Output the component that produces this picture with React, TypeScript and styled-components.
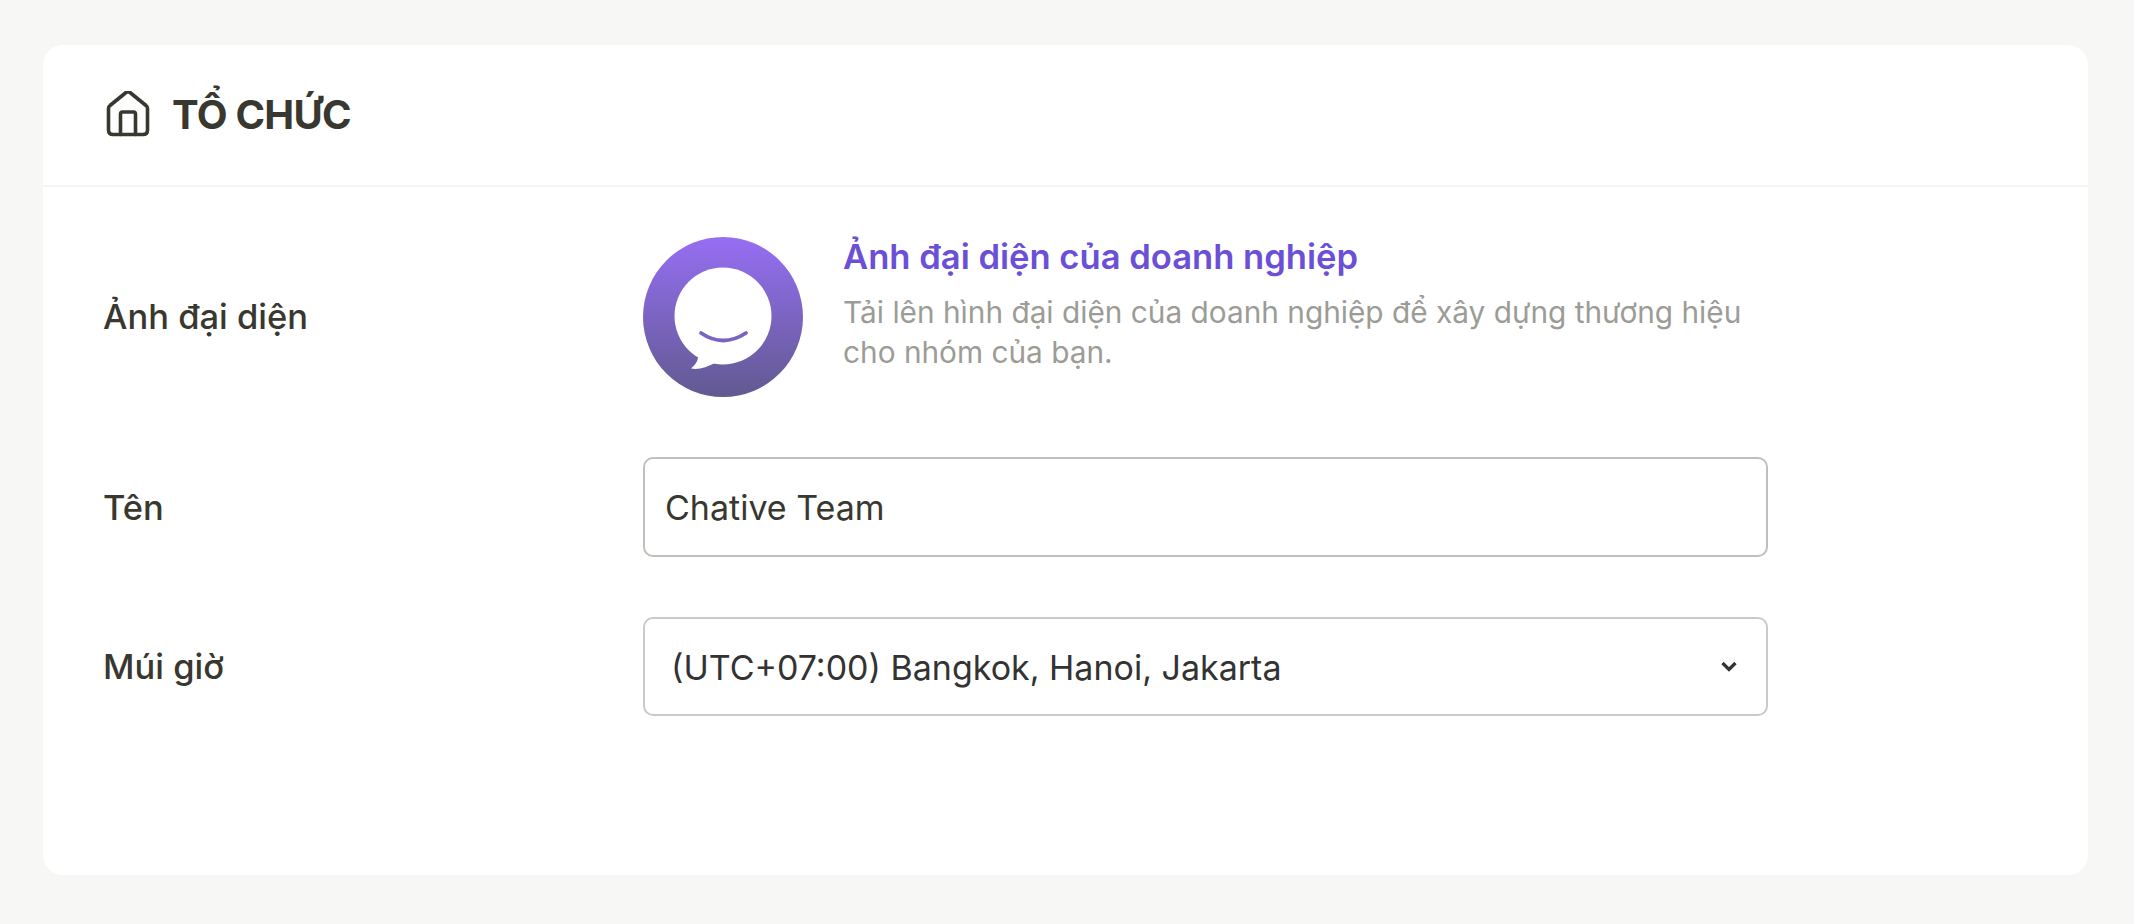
import React from "react";
import styled, { createGlobalStyle } from "styled-components";

const Global = createGlobalStyle`
  html, body { margin: 0; padding: 0; background: #f7f7f5; }
  body { font-family: Inter, "Noto Sans", sans-serif; }
`;

const Page = styled.div`
  box-sizing: border-box;
  width: 2134px;
  height: 924px;
  padding: 45px 46px 49px 43px;
  background: #f7f7f5;
`;

const Card = styled.main`
  height: 830px;
  background: #fff;
  border-radius: 20px;
`;

const Header = styled.header`
  box-sizing: border-box;
  height: 142px;
  padding-left: 63px;
  display: flex;
  align-items: center;
  gap: 22px;
  border-bottom: 2px solid #f5f5f1;
`;

const Title = styled.h1`
  margin: 0;
  font-size: 40px;
  line-height: 44px;
  font-weight: 700;
  letter-spacing: -0.75px;
  color: #383830;
`;

const Body = styled.div`
  padding: 50px 0 0 60px;
  display: flex;
  flex-direction: column;
  gap: 60px;
`;

const Row = styled.div`
  display: flex;
  align-items: center;
`;

const Label = styled.label<{ $nudge?: number }>`
  width: 540px;
  flex: none;
  padding-top: ${(p) => p.$nudge ?? 0}px;
  font-size: 34.5px;
  line-height: 40px;
  font-weight: 500;
  color: #383830;
`;

const AvatarBlock = styled.div`
  display: flex;
  align-items: flex-start;
  gap: 40px;
`;

const AvatarText = styled.div`
  width: 905px;
  margin-top: -1px;
`;

const AvatarTitle = styled.div`
  font-size: 34.6px;
  line-height: 40px;
  font-weight: 600;
  color: #6b4fd6;
  margin-bottom: 16px;
`;

const AvatarHint = styled.div`
  font-size: 29.8px;
  line-height: 40px;
  font-weight: 400;
  color: #9c9c96;
`;

const TextField = styled.input`
  box-sizing: border-box;
  width: 1125px;
  height: 100px;
  padding: 0 20px;
  border: 2px solid #c0c0ba;
  border-radius: 10px;
  outline: none;
  background: #fff;
  font-family: inherit;
  font-size: 34px;
  color: #383830;
`;

const SelectWrap = styled.div`
  position: relative;
  width: 1125px;
  height: 99px;
`;

const SelectField = styled.select`
  box-sizing: border-box;
  width: 100%;
  height: 100%;
  padding: 2px 26px 0;
  appearance: none;
  border: 2px solid #cacaca;
  border-radius: 10px;
  outline: none;
  background: #fff;
  font-family: inherit;
  font-size: 34px;
  color: #333;
`;

const Chevron = styled.svg`
  position: absolute;
  right: 31px;
  top: 44px;
  pointer-events: none;
`;

const HomeIcon = () => (
  <svg width="44" height="48" viewBox="0 2 44 48" fill="none" stroke="#383830" strokeWidth="3.6" strokeLinejoin="round" strokeLinecap="round">
    <path d="M2.5 19.5 Q2.5 17.5 4 16.5 L20 3.5 Q22 2 24 3.5 L40 16.5 Q41.5 17.5 41.5 19.5 V41 Q41.5 45.5 37 45.5 H7 Q2.5 45.5 2.5 41 Z" />
    <path d="M14.5 45.5 V25 Q14.5 23 16.5 23 H27.5 Q29.5 23 29.5 25 V45.5" />
  </svg>
);

const Logo = () => (
  <svg width="160" height="160" viewBox="0 0 160 160" style={{ flex: "none" }}>
    <defs>
      <linearGradient id="logoGrad" x1="0" y1="0" x2="0" y2="1">
        <stop offset="0" stopColor="#966ef3" />
        <stop offset="1" stopColor="#615a90" />
      </linearGradient>
    </defs>
    <circle cx="80" cy="80" r="80" fill="url(#logoGrad)" />
    <circle cx="80" cy="79" r="48.5" fill="#fff" />
    <path d="M55 116 C56 123 53 127 48 131.5 C56 133 64 130 72 126 Z" fill="#fff" />
    <path d="M58 96 Q80 111 103 96" fill="none" stroke="#7a63c2" strokeWidth="3.8" strokeLinecap="round" />
  </svg>
);

export default function App() {
  return (
    <Page>
      <Global />
      <Card>
        <Header>
          <HomeIcon />
          <Title>TỔ CHỨC</Title>
        </Header>
        <Body>
          <Row>
            <Label>Ảnh đại diện</Label>
            <AvatarBlock>
              <Logo />
              <AvatarText>
                <AvatarTitle>Ảnh đại diện của doanh nghiệp</AvatarTitle>
                <AvatarHint>Tải lên hình đại diện của doanh nghiệp để xây dựng thương hiệu cho nhóm của bạn.</AvatarHint>
              </AvatarText>
            </AvatarBlock>
          </Row>
          <Row>
            <Label $nudge={1}>Tên</Label>
            <TextField defaultValue="Chative Team" />
          </Row>
          <Row>
            <Label>Múi giờ</Label>
            <SelectWrap>
              <SelectField defaultValue="hn">
                <option value="hn">(UTC+07:00) Bangkok, Hanoi, Jakarta</option>
              </SelectField>
              <Chevron width="16" height="11" viewBox="0 0 16 11" fill="none" stroke="#333" strokeWidth="3.2">
                <path d="M1.5 2 L8 8.5 L14.5 2" />
              </Chevron>
            </SelectWrap>
          </Row>
        </Body>
      </Card>
    </Page>
  );
}
